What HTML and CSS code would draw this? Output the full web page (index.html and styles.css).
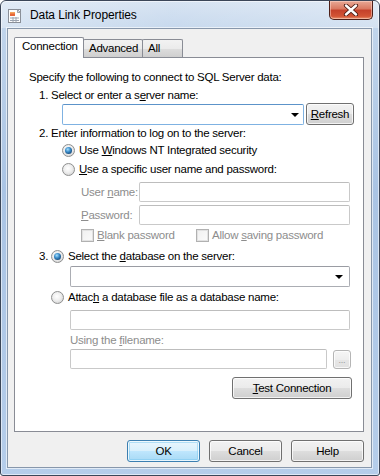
FILE: index.html
```html
<!DOCTYPE html>
<html lang="en">

<head>
    <meta charset="UTF-8">
    <meta name="viewport" content="width=device-width, initial-scale=1.0">
    <title>Data Link Properties</title>
    <link rel="stylesheet" href="styles.css">
</head>

<body>
<div class="window">
    <div class="titlebar">
        <svg class="app-icon" width="16" height="16" viewBox="0 0 16 16">
            <rect x="1.5" y="1.5" width="12" height="13" fill="#fdfdfd" stroke="#8a8f98"/>
            <path d="M10.5 1.5 L13.5 4.5 L10.5 4.5 Z" fill="#d6d9de" stroke="#8a8f98" stroke-width="0.8"/>
            <rect x="3" y="4" width="5" height="4" fill="#e7663a"/>
            <rect x="3" y="4" width="5" height="1.5" fill="#f4a35a"/>
            <path d="M3 10 H12 M3 12.5 H12 M6 9 V14 M9 9 V14" stroke="#9aa3b0" stroke-width="1"/>
        </svg>
        <span class="title">Data Link Properties</span>
        <div class="close-btn">
            <svg width="18" height="12" viewBox="0 0 18 12">
                <path d="M4 1.5 L14 10.5 M14 1.5 L4 10.5" stroke="#4a1a12" stroke-width="4.2" stroke-linecap="round"/>
                <path d="M4 1.5 L14 10.5 M14 1.5 L4 10.5" stroke="#ffffff" stroke-width="2.4" stroke-linecap="round"/>
            </svg>
        </div>
    </div>

    <div class="client">
        <div class="tabs">
            <div class="tab active">Connection</div>
            <div class="tab">Advanced</div>
            <div class="tab">All</div>
        </div>

        <div class="panel">
            <div class="row intro"><span>Specify the following to connect to SQL Server data:</span></div>
            <div class="row step"><span>1. Select or enter a s<u>e</u>rver name:</span></div>

            <div class="server-row">
                <div class="combo combo-server focus">
                    <span class="arrow"></span>
                </div>
                <div class="btn btn-refresh"><span><u>R</u>efresh</span></div>
            </div>

            <div class="row step"><span>2. Enter information to log on to the server:</span></div>

            <div class="row opt opt-first">
                <span class="radio checked"></span>
                <span>Use <u>W</u>indows NT Integrated security</span>
            </div>
            <div class="row opt opt-second">
                <span class="radio"></span>
                <span><u>U</u>se a specific user name and password:</span>
            </div>

            <div class="field-row fr-user">
                <span class="field-label disabled">User <u>n</u>ame:</span>
                <div class="textbox tb-login"></div>
            </div>
            <div class="field-row fr-pass">
                <span class="field-label disabled"><u>P</u>assword:</span>
                <div class="textbox tb-login"></div>
            </div>

            <div class="row checks">
                <span class="check-item check-blank">
                    <span class="checkbox"></span>
                    <span class="disabled"><u>B</u>lank password</span>
                </span>
                <span class="check-item check-allow">
                    <span class="checkbox"></span>
                    <span class="disabled">Allow <u>s</u>aving password</span>
                </span>
            </div>

            <div class="row db-select">
                <span class="num">3.</span>
                <span class="radio checked"></span>
                <span>Select the <u>d</u>atabase on the server:</span>
            </div>
            <div class="combo combo-db">
                <span class="arrow"></span>
            </div>

            <div class="row db-attach">
                <span class="radio"></span>
                <span>Attac<u>h</u> a database file as a database name:</span>
            </div>
            <div class="textbox tb-attach"></div>

            <div class="row using"><span class="disabled">Using the <u>f</u>ilename:</span></div>
            <div class="file-row">
                <div class="textbox tb-file"></div>
                <div class="btn btn-browse">...</div>
            </div>

            <div class="test-row">
                <div class="btn btn-test"><span><u>T</u>est Connection</span></div>
            </div>
        </div>

        <div class="buttons">
            <div class="btn btn-dialog btn-default">OK</div>
            <div class="btn btn-dialog">Cancel</div>
            <div class="btn btn-dialog">Help</div>
        </div>
    </div>
</div>
</body>
</html>
```

FILE: styles.css
```css
body {
    margin: 0;
    padding: 0;
    background-color: #ffffff;
    font-family: 'Liberation Sans', Arial, sans-serif;
    font-size: 11.5px;
    letter-spacing: -0.25px;
    color: #000;
}

u {
    text-decoration: underline;
    text-underline-offset: 1px;
}

.window {
    width: 380px;
    height: 476px;
    box-sizing: border-box;
    border: 1px solid #3b4658;
    border-radius: 6px 6px 3px 3px;
    background: linear-gradient(180deg, #d3e1f1 0%, #c0d4eb 6%, #aac4e4 40%, #b5cdea 100%);
    box-shadow: inset 0 0 0 1px rgba(255, 255, 255, 0.55);
    display: flex;
    flex-direction: column;
    overflow: hidden;
}

.titlebar {
    height: 27px;
    display: flex;
    align-items: flex-start;
    background: linear-gradient(90deg, rgba(255,255,255,0.35) 0%, rgba(255,255,255,0.1) 45%, rgba(255,255,255,0.3) 100%);
}

.app-icon {
    margin: 7px 0 0 6px;
}

.title {
    margin: 7px 0 0 7px;
    font-size: 12px;
    letter-spacing: -0.1px;
    color: #000;
}

.close-btn {
    margin-left: auto;
    margin-right: 6px;
    width: 44px;
    height: 19px;
    box-sizing: border-box;
    border: 1px solid #4d1f18;
    border-top: none;
    border-radius: 0 0 5px 5px;
    background: linear-gradient(180deg, #e8a996 0%, #d9775f 45%, #c4402a 50%, #d35435 85%, #e9966f 100%);
    box-shadow: inset 0 0 0 1px rgba(255, 220, 210, 0.5);
    display: flex;
    align-items: center;
    justify-content: center;
}

.client {
    margin: 0 7px 7px 6px;
    flex: 1;
    box-sizing: border-box;
    border: 1px solid #8797ab;
    box-shadow: 0 0 0 1px rgba(255, 255, 255, 0.6);
    background-color: #f0f0f0;
    padding: 8px 7px 0 6px;
}

.tabs {
    display: flex;
    align-items: flex-end;
    height: 20px;
    position: relative;
    z-index: 1;
}

.tab {
    height: 18px;
    box-sizing: border-box;
    border: 1px solid #898c95;
    border-bottom: none;
    border-radius: 2px 2px 0 0;
    background: linear-gradient(180deg, #f2f2f2 0%, #ebebeb 50%, #dddddd 51%, #cfcfcf 100%);
    padding: 2px 6px 0 5px;
    margin-left: -1px;
    white-space: nowrap;
}

.tab.active {
    height: 21px;
    margin-bottom: -1px;
    background: #ffffff;
    padding: 2px 7px 0 7px;
    margin-left: 0;
    width: 70px;
    z-index: 2;
}

.tab.active + .tab {
    margin-left: -1px;
    width: 60px;
}

.tab:last-child {
    width: 41px;
}

.panel {
    height: 375px;
    box-sizing: border-box;
    border: 1px solid #898c95;
    background-color: #ffffff;
    padding-top: 11px;
}

.row {
    height: 16px;
    line-height: 16px;
    display: flex;
    align-items: center;
    white-space: nowrap;
}

.intro {
    padding-left: 14px;
}

.step {
    padding-left: 24px;
    margin-top: 2px;
}

.disabled {
    color: #8d8d8d;
}

/* combo boxes, text boxes */
.combo,
.textbox {
    box-sizing: border-box;
    border: 1px solid #abadb3;
    border-top-color: #9a9ca3;
    border-radius: 2px;
    background: #ffffff;
    position: relative;
}

.textbox {
    border-color: #c9c9c9;
    border-top-color: #bdbdbd;
    height: 20px;
}

.combo.focus {
    border-color: #7fb2e2;
    border-top-color: #5c93c9;
}

.arrow {
    position: absolute;
    right: 6px;
    top: 7px;
    width: 0;
    height: 0;
    border-left: 4px solid transparent;
    border-right: 4px solid transparent;
    border-top: 4px solid #000;
}

.server-row {
    display: flex;
    align-items: flex-start;
    height: 22px;
    margin-left: 47px;
}

.combo-server {
    width: 242px;
    height: 21px;
    margin-top: 1px;
}

.combo-server .arrow {
    right: 4px;
    top: 8px;
}

.server-row + .step {
    margin-top: 0;
}

/* buttons */
.btn {
    box-sizing: border-box;
    border: 1px solid #707070;
    border-radius: 3px;
    background: linear-gradient(180deg, #f2f2f2 0%, #ebebeb 48%, #dddddd 52%, #cfcfcf 100%);
    box-shadow: inset 0 0 0 1px rgba(255, 255, 255, 0.75);
    display: flex;
    align-items: center;
    justify-content: center;
    white-space: nowrap;
}

.btn-refresh {
    width: 48px;
    height: 22px;
    margin-left: 2px;
}

.btn-browse {
    width: 18px;
    height: 19px;
    margin-left: 6px;
    margin-top: 1px;
    border-color: #b5b5b5;
    color: #9a9a9a;
    font-size: 9px;
    background: linear-gradient(180deg, #f6f6f6 0%, #eeeeee 50%, #e6e6e6 51%, #e1e1e1 100%);
}

.btn-test {
    width: 120px;
    height: 22px;
}

.test-row {
    display: flex;
    justify-content: flex-end;
    margin-top: 8px;
    padding-right: 11px;
}

/* radios and checkboxes */
.radio {
    width: 13px;
    height: 13px;
    box-sizing: border-box;
    border-radius: 50%;
    border: 1px solid #8e8f8f;
    background: radial-gradient(circle at 45% 40%, #ffffff 0%, #eeeeee 45%, #c8c8c8 100%);
    display: inline-flex;
    align-items: center;
    justify-content: center;
    flex-shrink: 0;
}

.radio.checked::after {
    content: "";
    width: 7px;
    height: 7px;
    border-radius: 50%;
    background: radial-gradient(circle at 40% 35%, #a6e0ff 0%, #3a8cc9 40%, #1a4e7f 75%, #0f2f52 100%);
}

.checkbox {
    width: 13px;
    height: 13px;
    box-sizing: border-box;
    border: 1px solid #b1b1b1;
    background: linear-gradient(135deg, #f0f0f0 0%, #fbfbfb 100%);
    box-shadow: inset 0 0 0 1px #e2e2e2;
    flex-shrink: 0;
}

.opt {
    padding-left: 47px;
}

.opt .radio {
    margin-right: 4px;
}

.opt-first {
    margin-top: 1px;
}

.opt-second {
    margin-top: 3px;
}

.field-row {
    display: flex;
    align-items: center;
    height: 20px;
    padding-left: 66px;
    white-space: nowrap;
}

.fr-user {
    margin-top: 5px;
}

.fr-pass {
    margin-top: 3px;
}

.field-label {
    width: 58px;
}

.tb-login {
    width: 211px;
}

.checks {
    margin-top: 2px;
    padding-left: 66px;
}

.check-item {
    display: flex;
    align-items: center;
}

.check-item .checkbox {
    margin-right: 3px;
}

.check-blank {
    width: 115px;
}

.db-select {
    margin-top: 5px;
    padding-left: 24px;
}

.num {
    width: 12px;
}

.db-select .radio,
.db-attach .radio {
    margin-right: 4px;
}

.combo-db {
    width: 280px;
    height: 21px;
    margin: 2px 0 0 55px;
}

.combo-db .arrow {
    top: 8px;
}

.db-attach {
    margin-top: 2px;
    padding-left: 36px;
}

.tb-attach {
    width: 280px;
    margin: 5px 0 0 55px;
}

.using {
    margin-top: 2px;
    padding-left: 55px;
}

.file-row {
    display: flex;
    align-items: flex-start;
    margin: 1px 0 0 55px;
}

.tb-file {
    width: 257px;
}

/* bottom buttons */
.buttons {
    display: flex;
    justify-content: flex-end;
    gap: 9px;
    margin-top: 8px;
}

.btn-dialog {
    width: 73px;
    height: 22px;
}

.btn-default {
    border-color: #3c7fb1;
    background: linear-gradient(180deg, #eaf6fd 0%, #d9f0fc 48%, #bee6fd 52%, #a7d9f5 100%);
    box-shadow: inset 0 0 0 1px rgba(255, 255, 255, 0.8), inset 0 0 0 2px rgba(120, 200, 240, 0.5);
}
```
